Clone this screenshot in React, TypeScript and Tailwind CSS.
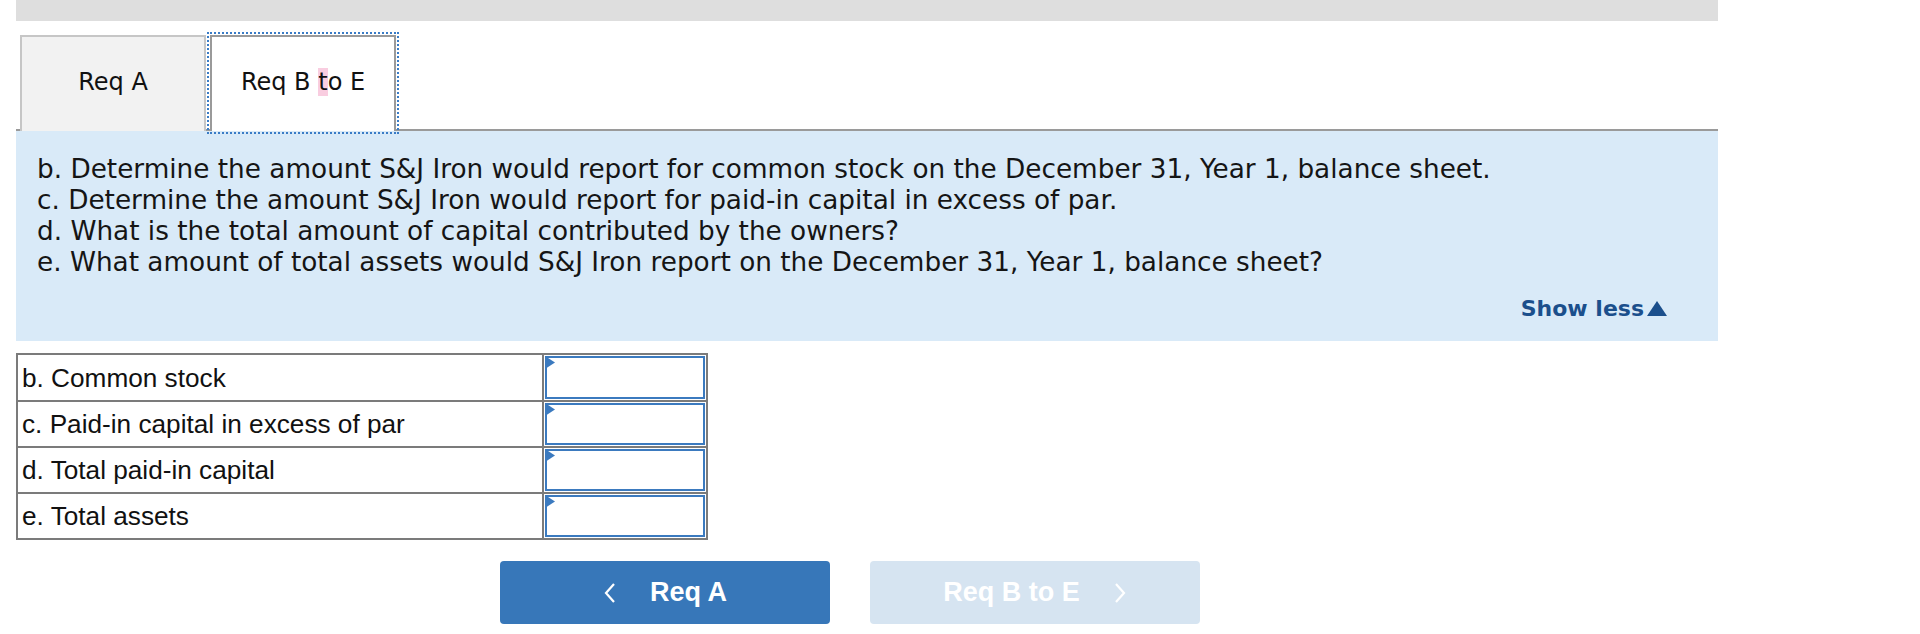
import React from "react";

const rows = [
  "b. Common stock",
  "c. Paid-in capital in excess of par",
  "d. Total paid-in capital",
  "e. Total assets",
];

const questions = [
  "b. Determine the amount S&J Iron would report for common stock on the December 31, Year 1, balance sheet.",
  "c. Determine the amount S&J Iron would report for paid-in capital in excess of par.",
  "d. What is the total amount of capital contributed by the owners?",
  "e. What amount of total assets would S&J Iron report on the December 31, Year 1, balance sheet?",
];

function Chevron({ dir }: { dir: "left" | "right" }) {
  return (
    <svg width="13" height="20" viewBox="0 0 13 20" fill="none">
      <path
        d={dir === "left" ? "M11 1 L3 10 L11 19" : "M2 1 L10 10 L2 19"}
        stroke="currentColor"
        strokeWidth="2.2"
      />
    </svg>
  );
}

export default function App() {
  return (
    <div className="min-h-[634px] w-[1920px] bg-white pl-4 font-['DejaVu_Sans',Verdana,sans-serif]">
      <div className="w-[1702px]">
        {/* top grey strip */}
        <div className="h-[21px] bg-[#dedede]" />

        {/* tabs */}
        <div className="mt-[14px] flex border-b-2 border-[#9a9a9a] pl-1">
          <div className="-mb-[2px] flex h-[96px] w-[186px] items-center justify-center border-2 border-b-0 border-[#c6c6c6] bg-[#f2f2f2] pb-1 text-[24px] text-[#111]">
            Req A
          </div>
          <div className="relative -mb-[2px] ml-1 flex h-[96px] w-[186px] items-center justify-center border-2 border-b-0 border-[#9a9a9a] bg-white pb-1 text-[24px] text-[#111] outline-2 outline-offset-1 outline-dotted outline-[#3a7cc6]">
            <span>
              Req B <span className="bg-[#f9cde0]">t</span>o E
            </span>
          </div>
        </div>

        {/* question panel */}
        <div className="bg-[#d9eaf8] pb-[17px] pl-[21px] pr-[50px] pt-[23px] text-[26.3px] leading-[31px] text-[#151515]">
          {questions.map((q) => (
            <p key={q}>{q}</p>
          ))}
          <div className="mt-[15px] flex items-center justify-end gap-[2px] text-[22px] font-bold text-[#1b4f8c]">
            <span>Show less</span>
            <svg width="22" height="15" viewBox="0 0 22 15">
              <path d="M11 0 L21 15 L1 15 Z" fill="currentColor" />
            </svg>
          </div>
        </div>

        {/* answer table */}
        <div className="mt-3 w-[692px] border-2 border-[#7b7b7b] font-['Liberation_Sans',Arial,sans-serif] text-[26.2px] text-[#111]">
          {rows.map((r, i) => (
            <div
              key={r}
              className={`flex ${i > 0 ? "h-[46px] border-t-2 border-[#7b7b7b]" : "h-[45px]"}`}
            >
              <div className="flex w-[526px] items-center border-r-2 border-[#7b7b7b] pl-1 pt-[2px]">
                {r}
              </div>
              <div className="flex-1 p-[1px]">
                <div className="relative h-full border-2 border-[#3b7abf] bg-white">
                  <svg
                    className="absolute -left-[2px] -top-[2px]"
                    width="10"
                    height="13"
                    viewBox="0 0 10 13"
                  >
                    <path d="M0 0 L10 6.5 L0 13 Z" fill="#3b7abf" />
                  </svg>
                </div>
              </div>
            </div>
          ))}
        </div>

        {/* nav buttons */}
        <div className="mt-[21px] flex gap-[40px] pl-[484px] font-['Liberation_Sans',Arial,sans-serif] text-[27px] font-bold">
          <button className="flex h-[63px] w-[330px] items-center justify-center gap-[34px] rounded-[4px] bg-[#3777b9] text-white">
            <Chevron dir="left" />
            <span>Req A</span>
          </button>
          <button className="flex h-[63px] w-[330px] items-center justify-center gap-[34px] rounded-[4px] bg-[#d6e4f1] text-white">
            <span>Req B to E</span>
            <Chevron dir="right" />
          </button>
        </div>
      </div>
    </div>
  );
}
